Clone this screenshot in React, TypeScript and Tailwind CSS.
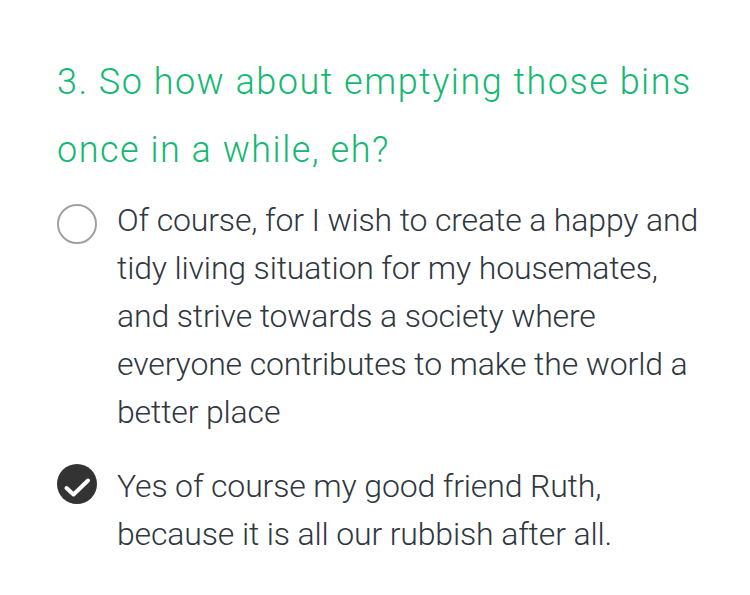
export default function App() {
  return (
    <div className="w-[750px] h-[595px] bg-white font-['Roboto',sans-serif] pl-[57px] pt-[48px]">
      <h2 className="text-[36px] leading-[68px] font-light tracking-[1.5px] text-[#15b872] whitespace-nowrap">
        3. So how about emptying those bins
        <br />
        once in a while, eh?
      </h2>

      <div className="mt-[12px] flex flex-col gap-[26px]">
        <div className="flex items-start gap-[20px]">
          <div className="mt-[8px] w-[40px] h-[40px] shrink-0 rounded-full border-[2px] border-[#a0a0a0]" />
          <p className="text-[32px] leading-[48px] font-light tracking-[-0.15px] text-[#2f3740] whitespace-nowrap">
            Of course, for I wish to create a happy and
            <br />
            tidy living situation for my housemates,
            <br />
            and strive towards a society where
            <br />
            everyone contributes to make the world a
            <br />
            better place
          </p>
        </div>

        <div className="flex items-start gap-[20px]">
          <svg className="mt-[2px] shrink-0" width="40" height="40" viewBox="0 0 40 40" fill="none">
            <circle cx="20" cy="20" r="20" fill="#333333" />
            <path d="M9.5 24l7 6.5L31 16.5" stroke="white" strokeWidth="4" strokeLinecap="round" strokeLinejoin="round" />
          </svg>
          <p className="text-[32px] leading-[48px] font-light tracking-[-0.15px] text-[#2f3740] whitespace-nowrap">
            Yes of course my good friend Ruth,
            <br />
            because it is all our rubbish after all.
          </p>
        </div>
      </div>
    </div>
  );
}
